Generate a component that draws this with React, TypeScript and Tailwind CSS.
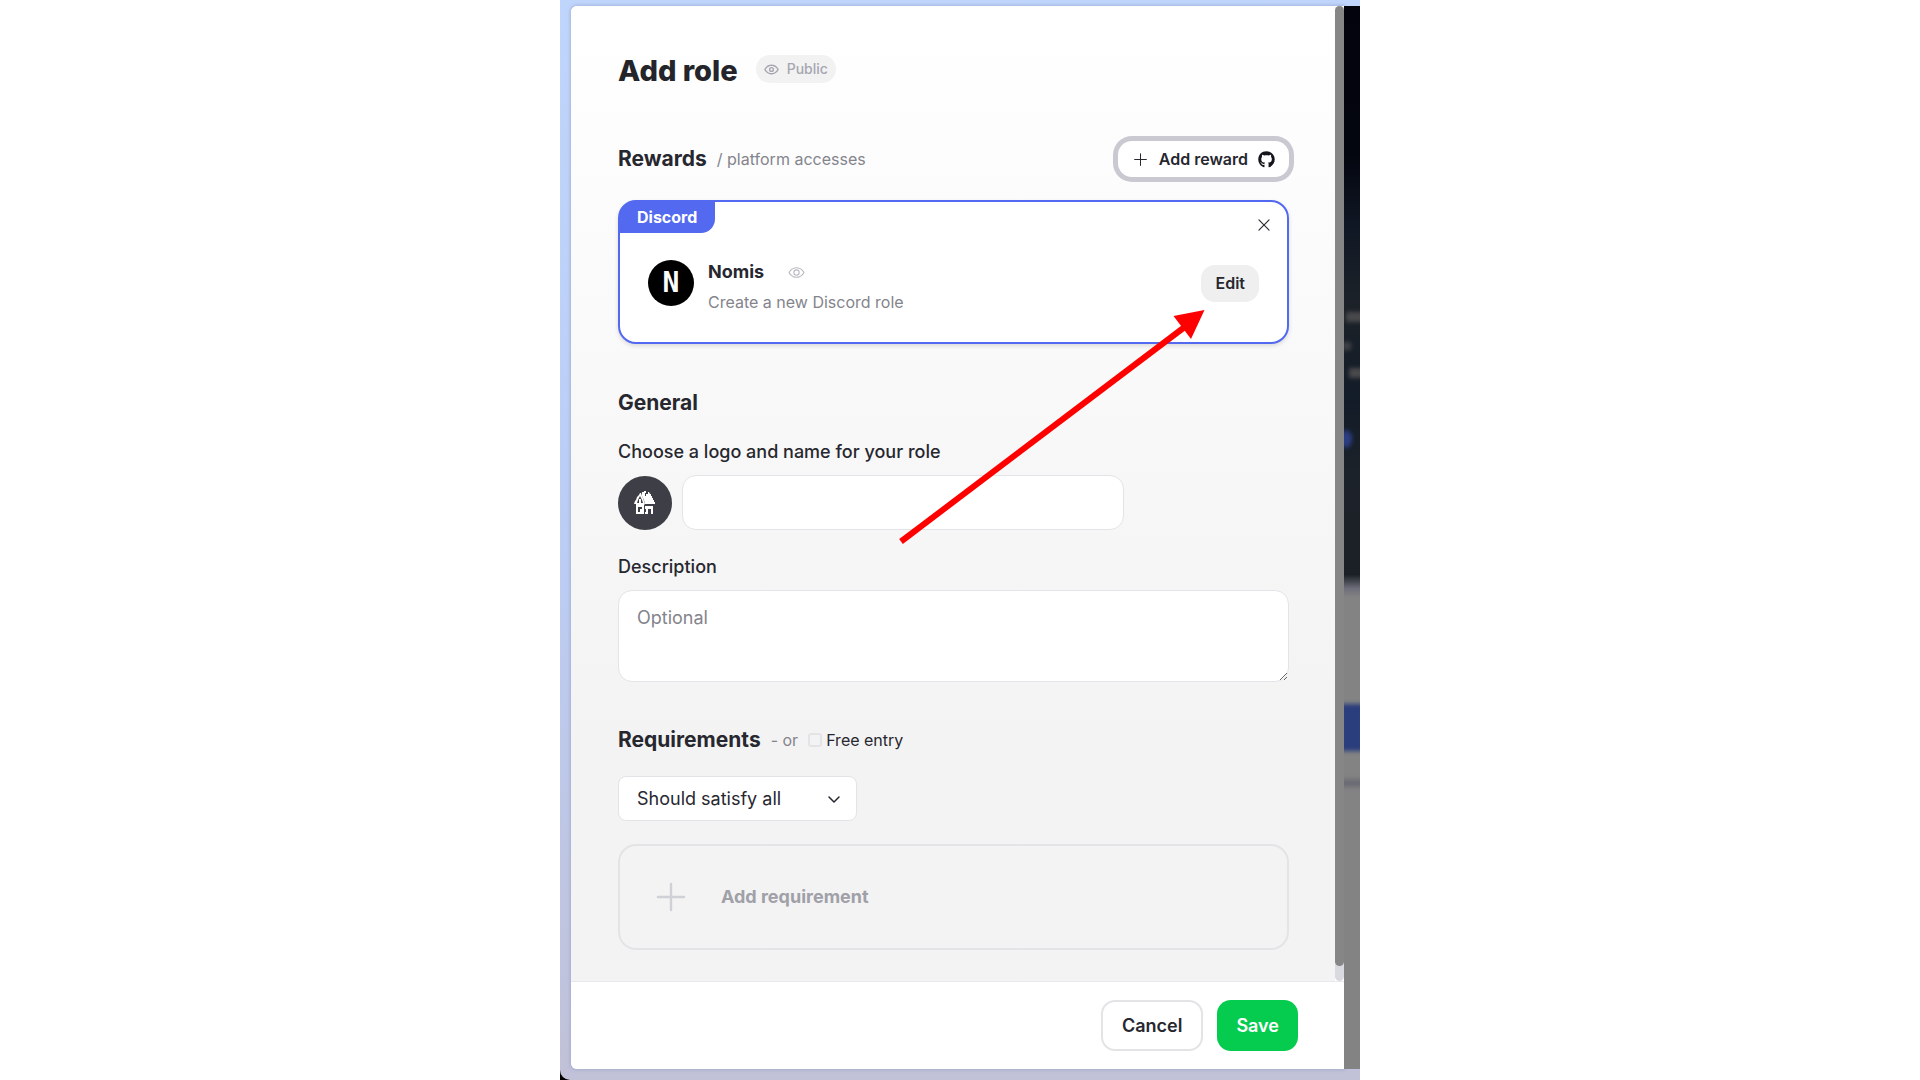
import { useState } from "react";
import { FaGithub } from "react-icons/fa";
import { PiCaretDownBold, PiEye, PiEyeBold, PiPlus, PiX } from "react-icons/pi";

const HouseIcon = () => (
  <svg width="22" height="23" viewBox="0 0 22 23" fill="#fff" aria-hidden="true">
    <path d="M8 1h2V0h2v2h-1v3h1V3h2V1h1l1 2h1v2h1v2h1v2h1v2h1v2H11l-1-4-2-4Z" />
    <path
      fillRule="evenodd"
      d="M6 2h1l1 3 1 2 1 3 1 3-1 1v9H2V13H0l1-3 1-1 1-3 2-2ZM6 5 4 9l-1 3h6L8 9ZM4 16v5h2v-3h2v-2Z"
    />
    <path d="M5 8h2v4H5Z" />
    <path fillRule="evenodd" d="M11 15h8v8h-2v-5h-3v5h-3v-2h1v-3h-1Z" />
  </svg>
);

const Arrow = () => (
  <svg
    className="absolute top-[304px] left-[334px] pointer-events-none"
    width="316"
    height="244"
    viewBox="0 0 316 244"
    aria-hidden="true"
  >
    <path d="M7 237.5 292 22" stroke="#f00" strokeWidth="6" />
    <path d="M310.500 6 279.500 12 297 35Z" fill="#f00" />
  </svg>
);

// Blurred page that shows through beside the drawer
const Backdrop = () => (
  <svg
    className="w-4 self-stretch shrink-0"
    height="100%"
    viewBox="0 0 16 1063"
    preserveAspectRatio="none"
    aria-hidden="true"
  >
    <defs>
      <linearGradient id="page" x1="0" y1="0" x2="0" y2="1">
        <stop offset="0" stopColor="#02030c" />
        <stop offset="0.14" stopColor="#04060f" />
        <stop offset="0.21" stopColor="#101825" />
        <stop offset="0.28" stopColor="#1c2228" />
        <stop offset="0.37" stopColor="#121b28" />
        <stop offset="0.44" stopColor="#1c2229" />
        <stop offset="0.535" stopColor="#1b2026" />
        <stop offset="0.548" stopColor="#6e6e7a" />
        <stop offset="0.556" stopColor="#838383" />
        <stop offset="1" stopColor="#838383" />
      </linearGradient>
      <filter id="soft" x="-50%" y="-50%" width="200%" height="200%">
        <feGaussianBlur stdDeviation="2" />
      </filter>
    </defs>
    <rect width="16" height="1063" fill="url(#page)" />
    <g filter="url(#soft)">
      <rect x="2" y="306" width="18" height="10" fill="#48494c" />
      <rect x="-2" y="336" width="9" height="8" fill="#414347" />
      <rect x="5" y="362" width="15" height="10" fill="#48494c" />
      <ellipse cx="2" cy="433" rx="6" ry="9" fill="#2b3d83" />
      <rect x="-4" y="698" width="24" height="47" fill="#2b3c7c" />
      <rect x="-4" y="773" width="24" height="8" fill="#6b6b75" />
    </g>
  </svg>
);

const App = () => {
  const [name, setName] = useState("");
  const [description, setDescription] = useState("");
  const [isFree, setIsFree] = useState(false);

  return (
    <div className="min-h-screen flex justify-center bg-white font-[Inter,sans-serif] text-[#27272f]">
      <div className="relative w-full max-w-[800px] flex bg-black">
        <main className="w-full flex rounded-bl-[10px] bg-linear-to-b from-[#c0d5fb] via-[#bccdf4] via-50% to-[#c1c1d8] pt-[6px] pb-[11px] pl-[11px]">
          <form
            className="grow flex flex-col rounded-l-md overflow-hidden bg-white shadow-[0_0_3px_1px_#8c9bc480]"
            onSubmit={(e) => e.preventDefault()}
          >
            <div className="grow flex">
              <div className="grow bg-linear-to-b from-white via-[#f3f3f3] via-75% to-[#f3f3f3] pt-[49px] pb-[30px] pl-[47px] pr-[46px]">
                <header className="flex items-start gap-[18px]">
                  <h1 className="text-[29px] leading-8 font-extrabold text-[#23252b]">
                    Add role
                  </h1>
                  <span className="h-7 flex items-center gap-2 rounded-full bg-[#f2f2f2] px-2 text-sm font-medium text-[#a6a6b0]">
                    <PiEyeBold size={15} />
                    Public
                  </span>
                </header>

                <section className="mt-[54px]">
                  <div className="flex items-center">
                    <h2 className="text-[21px] leading-7 font-bold">Rewards</h2>
                    <span className="ml-[10px] text-[#84848c]">
                      / platform accesses
                    </span>
                    <button
                      type="button"
                      className="ml-auto h-9 flex items-center gap-2.5 rounded-[14px] bg-white px-[14px] font-semibold ring-[5px] ring-[#cac9d2]"
                    >
                      <PiPlus size={17} />
                      Add reward
                      <FaGithub size={17} className="text-[#15151d]" />
                    </button>
                  </div>

                  <article className="relative mt-[23px] h-36 flex items-center rounded-[18px] border-2 border-[#5369f0] bg-white px-7 shadow-[0_2px_4px_#00000020]">
                    <span className="absolute -top-px -left-px h-8 flex items-center rounded-tl-2xl rounded-br-[14px] bg-[#5369f0] px-[18px] text-base font-bold text-white">
                      Discord
                    </span>
                    <button
                      type="button"
                      aria-label="Remove reward"
                      className="absolute top-3 right-3 p-0.5"
                    >
                      <PiX size={18} />
                    </button>
                    <div className="mt-[22px] w-full flex items-center">
                      <span className="size-[46px] shrink-0 flex items-center justify-center rounded-full bg-black font-['DejaVu_Sans_Mono',monospace] text-[28px] leading-none font-bold text-white">
                        N
                      </span>
                      <div className="pt-2 ml-[14px] flex flex-col gap-1.5">
                        <div className="flex items-center gap-6">
                          <h3 className="text-lg leading-6 font-bold">Nomis</h3>
                          <PiEye size={17} className="text-[#b8b8c0]" />
                        </div>
                        <p className="leading-6 text-[#84848c]">
                          Create a new Discord role
                        </p>
                      </div>
                      <button
                        type="button"
                        className="ml-auto h-[37px] rounded-[14px] bg-[#efeff0] px-[14px] font-semibold"
                      >
                        Edit
                      </button>
                    </div>
                  </article>
                </section>

                <section className="mt-[45px] flex flex-col">
                  <h2 className="text-[21px] leading-7 font-bold">General</h2>
                  <label
                    htmlFor="role-name"
                    className="mt-[23px] text-lg leading-6 font-medium"
                  >
                    Choose a logo and name for your role
                  </label>
                  <div className="mt-[11px] flex items-center gap-[10px]">
                    <button
                      type="button"
                      aria-label="Choose logo"
                      className="size-[54px] shrink-0 flex items-center justify-center rounded-full bg-[#3e3f46]"
                    >
                      <HouseIcon />
                    </button>
                    <input
                      id="role-name"
                      value={name}
                      onChange={(e) => setName(e.target.value)}
                      className="h-[55px] w-full max-w-[442px] rounded-[14px] border border-[#e4e4e8] bg-white px-[18px] text-lg"
                    />
                  </div>
                  <label
                    htmlFor="role-description"
                    className="mt-[25px] text-lg leading-6 font-medium"
                  >
                    Description
                  </label>
                  <textarea
                    id="role-description"
                    placeholder="Optional"
                    value={description}
                    onChange={(e) => setDescription(e.target.value)}
                    className="mt-[11px] h-[92px] w-full rounded-[14px] border border-[#e4e4e8] bg-white px-[18px] py-[15px] text-lg leading-6 placeholder:text-[#84848c]"
                  />
                </section>

                <section className="mt-[44px]">
                  <div className="flex items-center">
                    <h2 className="text-[21px] leading-7 font-bold">
                      Requirements
                    </h2>
                    <span className="ml-[10px] text-[#84848c]">- or</span>
                    <label className="ml-[10px] flex items-center gap-1">
                      <input
                        type="checkbox"
                        checked={isFree}
                        onChange={(e) => setIsFree(e.target.checked)}
                        className="size-[14px] appearance-none rounded-[3px] border-2 border-[#e4e4e8] checked:bg-[#5369f0]"
                      />
                      Free entry
                    </label>
                  </div>
                  <div className="relative mt-[22px] w-[239px]">
                    <select
                      aria-label="Requirement logic"
                      className="h-[45px] w-full appearance-none rounded-lg border border-[#e4e4e8] bg-white px-[18px] text-lg leading-6"
                    >
                      <option>Should satisfy all</option>
                      <option>Should satisfy any</option>
                    </select>
                    <PiCaretDownBold
                      size={16}
                      className="absolute top-[15px] right-[15px] pointer-events-none"
                    />
                  </div>
                  <button
                    type="button"
                    className="mt-[23px] h-[106px] w-full flex items-center gap-[31px] rounded-[18px] border-2 border-[#e4e4e7] px-8 text-lg font-bold text-[#a0a0a8]"
                  >
                    <PiPlus size={38} className="text-[#d0d0d7]" />
                    Add requirement
                  </button>
                </section>
              </div>
              <div className="w-[9px] shrink-0 flex flex-col rounded-full bg-[#d9dae0]">
                <div className="h-[98.500%] rounded-full bg-[#868686]" />
              </div>
            </div>

            <footer className="flex justify-end gap-[14px] border-t border-[#e8e8ee] bg-white py-[18px] pr-[46px] text-lg font-semibold">
              <button
                type="button"
                className="h-[51px] rounded-[14px] border-2 border-[#e4e4e7] px-[19px]"
              >
                Cancel
              </button>
              <button
                type="submit"
                className="h-[51px] rounded-[14px] bg-[#05cc4e] px-[19px] text-white"
              >
                Save
              </button>
            </footer>
          </form>
          <Backdrop />
        </main>
        <Arrow />
      </div>
    </div>
  );
};

export default App;
